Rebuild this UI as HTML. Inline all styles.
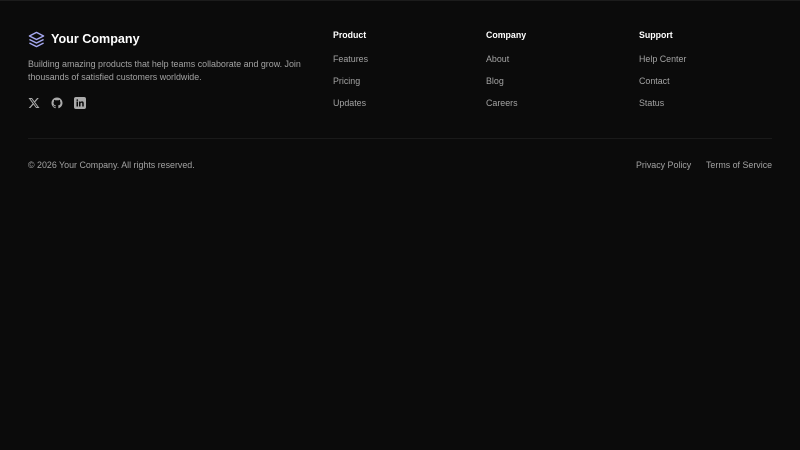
<!DOCTYPE html>
<html><head><style>
*{margin:0;padding:0;box-sizing:border-box}
body{width:800px;height:450px;background:#0b0b0b;font-family:"Liberation Sans",sans-serif;position:relative;overflow:hidden;border-top:1px solid #1c1c1c}
.a{position:absolute;white-space:nowrap}
.brand{left:51px;top:31px;font-size:12.6px;font-weight:bold;color:#fff}
.desc{left:28px;top:57px;font-size:8.9px;line-height:13px;color:#a3a3a3}
h4{position:absolute;font-size:8.8px;color:#fff;font-weight:bold;top:29px}
.l{position:absolute;font-size:8.9px;color:#a3a3a3}
.hr{position:absolute;left:28px;width:744px;top:137px;height:1px;background:#1a1a1a}
</style></head><body>
<svg class="a" style="left:28px;top:30px" width="17" height="17" viewBox="0 0 24 24" fill="none" stroke="#a5a8f0" stroke-width="2" stroke-linejoin="round"><path d="M12 2 2 7l10 5 10-5-10-5z"/><path d="m2 17 10 5 10-5"/><path d="m2 12 10 5 10-5"/></svg>
<div class="a brand">Your Company</div>
<div class="a desc">Building amazing products that help teams collaborate and grow. Join<br>thousands of satisfied customers worldwide.</div>
<svg class="a" style="left:28px;top:96px" width="12" height="12" viewBox="0 0 24 24" fill="#aaa"><path d="M18.2 2h3.4l-7.4 8.5L23 22h-6.8l-5.3-7-6.1 7H1.4l7.9-9L1 2h7l4.8 6.4L18.2 2zm-1.2 18h1.9L7.1 3.9H5.1L17 20z"/></svg>
<svg class="a" style="left:51px;top:96px" width="12" height="12" viewBox="0 0 24 24" fill="#aaa"><path d="M12 1C5.9 1 1 5.9 1 12c0 4.9 3.2 9 7.5 10.5.6.1.8-.2.8-.5v-2c-3.1.7-3.700-1.3-3.7-1.3-.5-1.3-1.2-1.6-1.2-1.6-1-.7.1-.7.1-.7 1.1.1 1.7 1.1 1.7 1.1 1 1.7 2.6 1.2 3.2.9.1-.7.4-1.2.7-1.5-2.4-.3-5-1.2-5-5.4 0-1.2.4-2.2 1.1-2.9-.1-.3-.5-1.4.1-2.9 0 0 .9-.3 3 1.1a10 10 0 0 1 5.5 0c2.1-1.4 3-1.1 3-1.1.6 1.5.2 2.6.1 2.9.7.8 1.1 1.7 1.1 2.9 0 4.2-2.6 5.1-5 5.4.4.3.7 1 .7 2v3c0 .3.2.6.8.5C19.8 21 23 16.9 23 12 23 5.9 18.1 1 12 1z"/></svg>
<svg class="a" style="left:74px;top:96px" width="12" height="12" viewBox="0 0 24 24"><rect width="24" height="24" rx="4" fill="#aaa"/><path d="M5 9h3v10H5zM6.5 4.5a1.7 1.7 0 1 1 0 3.4 1.7 1.7 0 0 1 0-3.4zM10 9h3v1.4c.5-.9 1.6-1.6 3.1-1.6 3 0 3.4 2 3.4 4.5V19h-3v-5c0-1.2 0-2.5-1.6-2.5S13 12.7 13 14v5h-3z" fill="#0b0b0b"/></svg>
<h4 style="left:333px">Product</h4>
<div class="l" style="left:333px;top:53px">Features</div>
<div class="l" style="left:333px;top:75px">Pricing</div>
<div class="l" style="left:333px;top:97px">Updates</div>
<h4 style="left:486px">Company</h4>
<div class="l" style="left:486px;top:53px">About</div>
<div class="l" style="left:486px;top:75px">Blog</div>
<div class="l" style="left:486px;top:97px">Careers</div>
<h4 style="left:639px">Support</h4>
<div class="l" style="left:639px;top:53px">Help Center</div>
<div class="l" style="left:639px;top:75px">Contact</div>
<div class="l" style="left:639px;top:97px">Status</div>
<div class="hr"></div>
<div class="l" style="left:28px;top:159px">© 2026 Your Company. All rights reserved.</div>
<div class="l" style="left:636px;top:159px">Privacy Policy</div>
<div class="l" style="left:706px;top:159px">Terms of Service</div>
</body></html>
